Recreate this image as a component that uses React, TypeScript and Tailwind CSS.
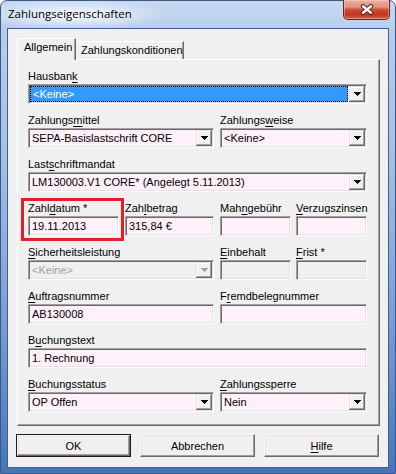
import React from "react";

const PINK = "bg-[#fff0fa]";

function Label({ text, u }: { text: string; u: number }) {
  return (
    <div className="h-[14px] leading-[14px] text-[11px] text-black whitespace-nowrap">
      {u >= 0 ? (
        <>
          {text.slice(0, u)}
          <span className="underline underline-offset-[2px]">{text[u]}</span>
          {text.slice(u + 1)}
        </>
      ) : (
        text
      )}
    </div>
  );
}

function DropBtn({ disabled }: { disabled?: boolean }) {
  return (
    <div className="w-[16px] h-[16px] shrink-0 flex items-center justify-center bg-[#f0f0f0] shadow-[inset_-1px_-1px_0_#696969,inset_1px_1px_0_#e3e3e3,inset_-2px_-2px_0_#a0a0a0,inset_2px_2px_0_#ffffff]">
      <svg width="7" height="4" viewBox="0 0 7 4" shapeRendering="crispEdges">
        <path
          d="M0 0h7v1h-1v1h-1v1h-1v1h-1v-1h-1v-1h-1v-1h-1z"
          fill={disabled ? "#a0a0a0" : "#000000"}
        />
      </svg>
    </div>
  );
}

type FieldProps = {
  value?: string;
  dropdown?: boolean;
  disabled?: boolean;
  selected?: boolean;
};

function Field({ value = "", dropdown, disabled, selected }: FieldProps) {
  return (
    <div
      className={`h-[20px] flex p-[1px] border border-t-[#a0a0a0] border-l-[#a0a0a0] border-b-white border-r-white shadow-[inset_1px_1px_0_#696969,inset_-1px_-1px_0_#e3e3e3] ${
        disabled ? "bg-[#f0f0f0]" : PINK
      }`}
    >
      {selected ? (
        <div className="flex-1 min-w-0 mr-[1px] bg-[#3399ff] border border-dotted border-black text-white pl-[2px] text-[11px] leading-[14px] whitespace-nowrap">
          {value}
        </div>
      ) : (
        <div
          className={`flex-1 min-w-0 pl-[2px] text-[11px] leading-[16px] whitespace-nowrap overflow-hidden ${
            disabled ? "text-[#a0a0a0]" : "text-black"
          }`}
        >
          {value}
        </div>
      )}
      {dropdown && <DropBtn disabled={disabled} />}
    </div>
  );
}

function Cell({
  w,
  label,
  u,
  children,
}: {
  w: string;
  label: string;
  u: number;
  children: React.ReactNode;
}) {
  return (
    <div className={`${w} flex flex-col gap-[1px]`}>
      <Label text={label} u={u} />
      {children}
    </div>
  );
}

function Button({
  children,
  isDefault,
}: {
  children: React.ReactNode;
  isDefault?: boolean;
}) {
  return (
    <div
      className={`w-[115px] h-[23px] ${
        isDefault ? "border border-[#2a1414]" : ""
      }`}
    >
      <div className="w-full h-full flex items-center justify-center bg-[#f0f0f0] border border-t-[#fbf6fb] border-l-[#fbf6fb] border-b-[#696969] border-r-[#696969] shadow-[inset_-1px_-1px_0_#a0a0a0,inset_1px_1px_0_#e8e3e8] text-[11px] leading-[14px] text-black">
        {children}
      </div>
    </div>
  );
}

function CloseBtn() {
  return (
    <div className="mr-[5px] mt-[-1px] w-[47px] h-[20px] rounded-b-[5px] border border-t-0 border-[#6a2418] bg-[linear-gradient(180deg,#eab0a2_0%,#df917f_38%,#c94a31_52%,#bf3820_78%,#d5653e_100%)] shadow-[inset_0_0_0_1px_rgba(255,215,200,0.45)] flex items-center justify-center">
      <svg width="14" height="11" viewBox="0 0 14 11">
        <g strokeLinecap="round">
          <path d="M3 2.2L11 8.8M11 2.2L3 8.8" stroke="#4a1a14" strokeWidth="4.2" />
          <path d="M3 2.2L11 8.8M11 2.2L3 8.8" stroke="#ffffff" strokeWidth="2.4" />
        </g>
      </svg>
    </div>
  );
}

export default function App() {
  return (
    <div className="w-[396px] h-[474px] bg-white font-['Liberation_Sans',Arial,sans-serif]">
      <div className="w-full h-full rounded-t-[7px] border border-[#3a5886] flex flex-col bg-[linear-gradient(180deg,#c8daf0_0px,#b7cdea_30px,#a6c1e4_150px,#7fa3d6_300px,#4774ba_474px)]">
        {/* Title bar */}
        <div className="h-[27px] shrink-0 flex items-start justify-between rounded-t-[6px] bg-[radial-gradient(ellipse_95px_15px_at_72px_14px,rgba(255,255,255,0.9),rgba(255,255,255,0)_100%)]">
          <div className="pl-[7px] pt-[5px] text-[11.5px] leading-[16px] font-['Open_Sans',sans-serif] text-black whitespace-nowrap">
            Zahlungseigenschaften
          </div>
          <CloseBtn />
        </div>

        {/* Client area */}
        <div className="flex-1 mx-[6px] mb-[5px] border border-[#3f5f8e] bg-[#f0f0f0] flex flex-col px-[8px] pt-[9px]">
          {/* Tabs */}
          <div className="flex items-end h-[21px] ml-[1px] relative z-10">
            <div className="h-[22px] mb-[-1px] w-[59px] bg-[#f0f0f0] border-l border-t border-l-white border-t-white border-r border-r-[#696969] shadow-[inset_-1px_0_0_#a0a0a0] pl-[6px] pt-[1px] text-[11px] leading-[14px] text-black">
              Allgemein
            </div>
            <div className="h-[18px] w-[108px] border-t border-t-white border-r border-r-[#696969] shadow-[inset_-1px_0_0_#a0a0a0] pl-[5px] pt-[1px] text-[11px] leading-[14px] text-black whitespace-nowrap">
              Zahlungskonditionen
            </div>
          </div>

          {/* Panel */}
          <div className="ml-[1px] w-[363px] h-[367px] border border-t-white border-l-white border-b-[#696969] border-r-[#696969] shadow-[inset_-1px_-1px_0_#a0a0a0] pt-[9px] pl-[10px] pr-[12px] flex flex-col gap-[9px]">
            <Cell w="w-[339px]" label="Hausbank" u={7}>
              <Field value="<Keine>" dropdown selected />
            </Cell>

            <div className="flex gap-[6px]">
              <Cell w="w-[186px]" label="Zahlungsmittel" u={8}>
                <Field value="SEPA-Basislastschrift CORE" dropdown />
              </Cell>
              <Cell w="w-[147px]" label="Zahlungsweise" u={8}>
                <Field value="<Keine>" dropdown />
              </Cell>
            </div>

            <Cell w="w-[339px]" label="Lastschriftmandat" u={4}>
              <Field value="LM130003.V1 CORE* (Angelegt 5.11.2013)" dropdown />
            </Cell>

            <div className="flex gap-[6px]">
              <div className="relative">
                <Cell w="w-[91px]" label="Zahldatum *" u={4}>
                  <Field value="19.11.2013" />
                </Cell>
                <div className="absolute left-[-7px] top-[-3px] right-[-5px] bottom-[-5px] border-[3px] border-[#e61e28] pointer-events-none" />
              </div>
              <Cell w="w-[89px]" label="Zahlbetrag" u={3}>
                <Field value="315,84 €" />
              </Cell>
              <div className="flex gap-[5px]">
                <Cell w="w-[71px]" label="Mahngebühr" u={3}>
                  <Field />
                </Cell>
                <Cell w="w-[71px]" label="Verzugszinsen" u={0}>
                  <Field />
                </Cell>
              </div>
            </div>

            <div className="flex gap-[6px]">
              <Cell w="w-[186px]" label="Sicherheitsleistung" u={0}>
                <Field value="<Keine>" dropdown disabled />
              </Cell>
              <div className="flex gap-[5px]">
                <Cell w="w-[71px]" label="Einbehalt" u={0}>
                  <Field disabled />
                </Cell>
                <Cell w="w-[71px]" label="Frist *" u={0}>
                  <Field disabled />
                </Cell>
              </div>
            </div>

            <div className="flex gap-[6px]">
              <Cell w="w-[186px]" label="Auftragsnummer" u={0}>
                <Field value="AB130008" />
              </Cell>
              <Cell w="w-[147px]" label="Fremdbelegnummer" u={1}>
                <Field />
              </Cell>
            </div>

            <Cell w="w-[339px]" label="Buchungstext" u={1}>
              <Field value="1. Rechnung" />
            </Cell>

            <div className="flex gap-[6px]">
              <Cell w="w-[186px]" label="Buchungsstatus" u={0}>
                <Field value="OP Offen" dropdown />
              </Cell>
              <Cell w="w-[147px]" label="Zahlungssperre" u={0}>
                <Field value="Nein" dropdown />
              </Cell>
            </div>
          </div>

          {/* Buttons */}
          <div className="mt-[8px] flex gap-[9px]">
            <Button isDefault>OK</Button>
            <Button>Abbrechen</Button>
            <Button>
              <span className="underline underline-offset-[2px]">H</span>ilfe
            </Button>
          </div>
        </div>
      </div>
    </div>
  );
}
